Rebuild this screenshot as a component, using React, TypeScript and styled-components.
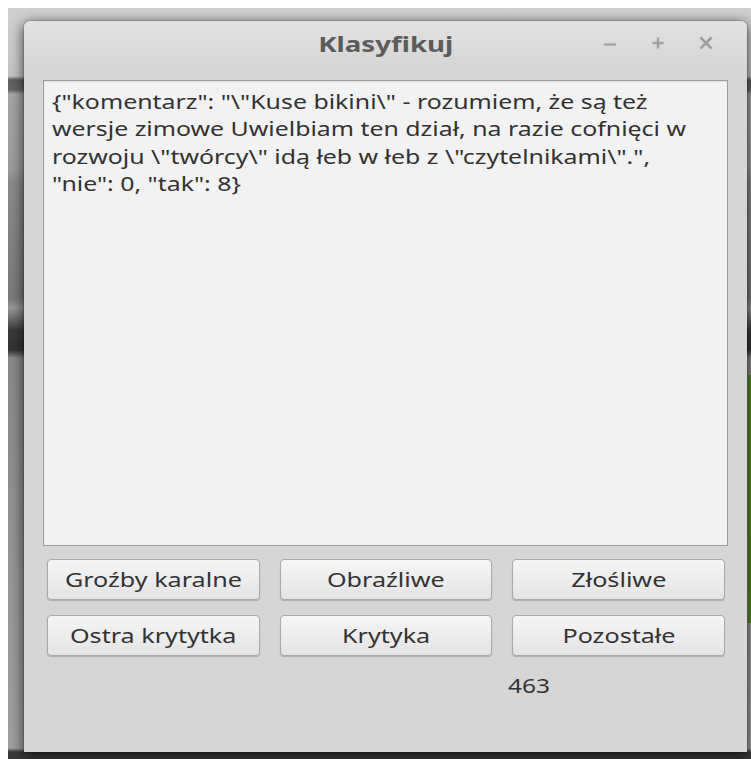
import React from "react";
import styled, { createGlobalStyle } from "styled-components";

const GlobalStyle = createGlobalStyle`
  html, body {
    margin: 0;
    padding: 0;
    background: #ffffff;
  }
  body {
    font-family: "Noto Sans", "Open Sans", "DejaVu Sans", sans-serif;
  }
`;

// the desktop renders glyphs a bit wider than Noto Sans' natural width
const STRETCH = 1.257;
const TEXT_STRETCH = 1.275;
const TEXT_WIDTH = 678;

// the record as printed by the classifier, one wrapped line per entry
const commentLines = [
  '{"komentarz": "\\"Kuse bikini\\" - rozumiem, że są też',
  "wersje zimowe Uwielbiam ten dział, na razie cofnięci w",
  'rozwoju \\"twórcy\\" idą łeb w łeb z \\"czytelnikami\\".",',
  '"nie": 0, "tak": 8}',
];

const labels = [
  "Groźby karalne",
  "Obraźliwe",
  "Złośliwe",
  "Ostra krytytka",
  "Krytyka",
  "Pozostałe",
];

export default function App() {
  return (
    <>
      <GlobalStyle />
      <Desktop>
        <Window>
          <TitleBar>
            <Title>Klasyfikuj</Title>
            <Controls>
              <ControlButton aria-label="minimize">
                <svg width="14" height="14" viewBox="0 0 14 14">
                  <path d="M1 8.5h12" stroke="#a0a0a0" strokeWidth="2.2" />
                </svg>
              </ControlButton>
              <ControlButton aria-label="maximize">
                <svg width="14" height="14" viewBox="0 0 14 14">
                  <path d="M1.5 7h11M7 1.5v11" stroke="#a0a0a0" strokeWidth="2.4" />
                </svg>
              </ControlButton>
              <ControlButton aria-label="close">
                <svg width="14" height="14" viewBox="0 0 14 14">
                  <path d="M1.5 1.5l11 11M12.5 1.5l-11 11" stroke="#a0a0a0" strokeWidth="2.6" />
                </svg>
              </ControlButton>
            </Controls>
          </TitleBar>
          <Body>
            <TextArea>
              <TextBody $stretch={TEXT_STRETCH} $width={TEXT_WIDTH}>
                {commentLines.join("\n")}
              </TextBody>
            </TextArea>
            <ButtonGrid>
              {labels.map((l) => (
                <PushButton key={l}>
                  <Wide $stretch={STRETCH}>{l}</Wide>
                </PushButton>
              ))}
              <Counter>
                <Wide $stretch={STRETCH} $origin="left center">
                  463
                </Wide>
              </Counter>
            </ButtonGrid>
          </Body>
        </Window>
      </Desktop>
    </>
  );
}

const Desktop = styled.div`
  box-sizing: border-box;
  margin: 8px 0 0 8px;
  width: 743px;
  height: 751px;
  padding: 13px 4px 0 16px;
  overflow: hidden;
  background-color: #9a9a9a;
  background-image: linear-gradient(#4f8a1e, #4f8a1e),
    linear-gradient(
      to bottom,
      #d0d0d0 0px,
      #c6c6c6 68px,
      #5e5e5e 72px,
      #666666 82px,
      #a6a6a6 86px,
      #9c9c9c 160px,
      #8c8c8c 175px,
      #7a7a7a 290px,
      #9a9a9a 300px,
      #3c3c3c 322px,
      #333333 342px,
      #8a8a8a 350px,
      #a0a0a0 740px,
      #3a3a3a 744px
    );
  background-size: 3px 248px, 100% 100%;
  background-position: right 0 top 367px, 0 0;
  background-repeat: no-repeat;
`;

const Window = styled.div`
  width: 723px;
  height: 731px;
  background: #d6d6d6;
  border-radius: 6px 6px 0 0;
  box-shadow: 0 0 0 1px rgba(0, 0, 0, 0.12), 0 3px 14px rgba(0, 0, 0, 0.75);
  display: flex;
  flex-direction: column;
`;

const TitleBar = styled.div`
  position: relative;
  height: 44px;
  display: flex;
  align-items: center;
  justify-content: center;
  background: linear-gradient(#e2e2e2, #d6d6d6);
  border-radius: 6px 6px 0 0;
`;

const Wide = styled.span<{ $stretch: number; $origin?: string }>`
  display: inline-block;
  white-space: nowrap;
  transform: scaleX(${(p) => p.$stretch});
  transform-origin: ${(p) => p.$origin ?? "center"};
`;

const Title = styled(Wide).attrs({ $stretch: STRETCH })`
  font-size: 22px;
  font-weight: 700;
  color: #5c5c5c;
  margin-top: -1px;
`;

const Controls = styled.div`
  position: absolute;
  right: 34px;
  top: 15px;
  display: flex;
  gap: 34px;
`;

const ControlButton = styled.div`
  width: 14px;
  height: 14px;
  display: flex;
`;

const Body = styled.div`
  flex: 1;
  display: flex;
  flex-direction: column;
  padding: 15px 19px 0 19px;
`;

const TextArea = styled.div`
  box-sizing: border-box;
  height: 466px;
  background: #f2f2f2;
  border: 1px solid #9c9c9c;
  box-shadow: inset 0 1px 1px rgba(0, 0, 0, 0.08);
  padding: 7px 0 7px 8px;
  overflow: hidden;
`;

const TextBody = styled.div<{ $stretch: number; $width: number }>`
  width: ${(p) => p.$width / p.$stretch}px;
  transform: scaleX(${(p) => p.$stretch});
  transform-origin: left top;
  white-space: pre-wrap;
  font-size: 19.5px;
  line-height: 27.3px;
  color: #333333;
`;

const ButtonGrid = styled.div`
  display: grid;
  grid-template-columns: repeat(3, 1fr);
  column-gap: 20px;
  row-gap: 15px;
  padding: 13px 3px 0 4px;
`;

const PushButton = styled.button`
  height: 41px;
  border: 1px solid #a9a9a9;
  border-radius: 4px;
  background: linear-gradient(#f5f5f5, #e4e4e4);
  box-shadow: 0 1px 1px rgba(0, 0, 0, 0.2);
  font-family: inherit;
  font-size: 20px;
  color: #333333;
  padding: 0;
  overflow: visible;
`;

const Counter = styled.div`
  grid-column: 3;
  margin-left: -4px;
  margin-top: 1px;
  font-size: 19.5px;
  color: #333333;
`;
